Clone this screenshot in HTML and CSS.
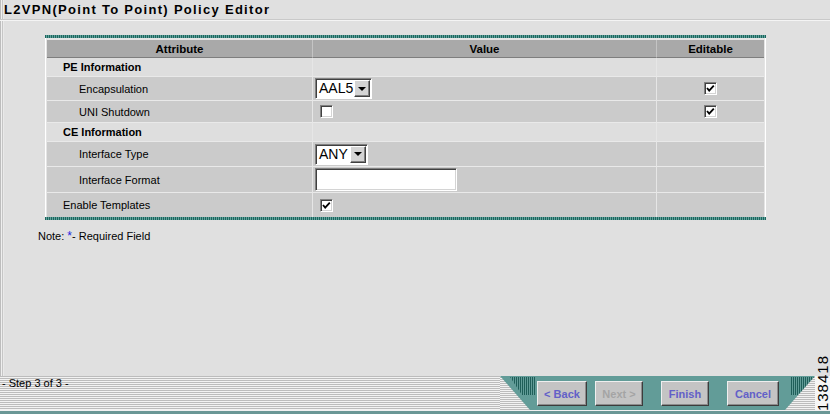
FILE: index.html
```html
<!DOCTYPE html>
<html lang="en">
<head>
  <meta charset="UTF-8" />
  <title>L2VPN(Point To Point) Policy Editor</title>
  <link rel="stylesheet" href="styles.css">
</head>
<body>
  <div class="page">
    <h1 class="title">L2VPN(Point To Point) Policy Editor</h1>

    <div class="content">
      <div class="policy-box">
        <div class="rule"></div>
        <div class="frame">
          <table class="policy">
            <tr class="head">
              <th class="col-attr">Attribute</th>
              <th class="col-val">Value</th>
              <th class="col-edit">Editable</th>
            </tr>
            <tr class="section r-pe">
              <td class="label">PE Information</td><td></td><td></td>
            </tr>
            <tr class="r-encap">
              <td class="sub">Encapsulation</td>
              <td class="val">
                <span class="select sel-aal"><span class="sel-text">AAL5</span><span class="sel-btn"><i class="tri"></i></span></span>
              </td>
              <td class="edit"><span class="cb"><svg width="11" height="11" viewBox="0 0 11 11"><polyline points="2,5 4.2,7.6 8.8,2.6" fill="none" stroke="#000" stroke-width="1.8"/></svg></span></td>
            </tr>
            <tr class="r-uni">
              <td class="sub">UNI Shutdown</td>
              <td class="val"><span class="cb cb-val"></span></td>
              <td class="edit"><span class="cb"><svg width="11" height="11" viewBox="0 0 11 11"><polyline points="2,5 4.2,7.6 8.8,2.6" fill="none" stroke="#000" stroke-width="1.8"/></svg></span></td>
            </tr>
            <tr class="section r-ce">
              <td class="label">CE Information</td><td></td><td></td>
            </tr>
            <tr class="r-type">
              <td class="sub">Interface Type</td>
              <td class="val">
                <span class="select sel-any"><span class="sel-text">ANY</span><span class="sel-btn"><i class="tri"></i></span></span>
              </td>
              <td class="edit"></td>
            </tr>
            <tr class="r-format">
              <td class="sub">Interface Format</td>
              <td class="val"><span class="field"></span></td>
              <td class="edit"></td>
            </tr>
            <tr class="r-tpl">
              <td class="top">Enable Templates</td>
              <td class="val"><span class="cb cb-val"><svg width="11" height="11" viewBox="0 0 11 11"><polyline points="2,5 4.2,7.6 8.8,2.6" fill="none" stroke="#000" stroke-width="1.8"/></svg></span></td>
              <td class="edit"></td>
            </tr>
          </table>
        </div>
        <div class="rule"></div>
      </div>

      <p class="note">Note: <span class="req">*</span>- Required Field</p>
    </div>

    <div class="footer">
      <div class="step">- Step 3 of 3 -</div>
      <div class="wizard">
        <svg class="corner" width="36" height="34" viewBox="0 0 36 34">
          <defs>
            <pattern id="hs" width="4" height="2" patternUnits="userSpaceOnUse">
              <rect width="4" height="1" fill="#f2f2f2"/>
              <rect y="1" width="4" height="1" fill="#bcbcbc"/>
            </pattern>
            <pattern id="vs" width="2" height="4" patternUnits="userSpaceOnUse">
              <rect width="1" height="4" fill="#1f5e59"/>
            </pattern>
          </defs>
          <polygon points="0,0 30,34 0,34" fill="url(#hs)"/>
          <polygon points="10,1 35,1 35,19 22,19" fill="url(#vs)"/>
        </svg>
        <button class="btn btn-back">&lt; Back</button>
        <button class="btn btn-next" disabled>Next &gt;</button>
        <button class="btn btn-finish">Finish</button>
        <button class="btn btn-cancel">Cancel</button>
        <svg class="corner" width="36" height="34" viewBox="0 0 36 34">
          <polygon points="36,0 36,34 6,34" fill="url(#hs)"/>
          <polygon points="11,1 35,1 19,19 11,19" fill="url(#vs)"/>
        </svg>
      </div>
      <div class="tail"></div>
    </div>
    <div class="strip"></div>

    <div class="figno">138418</div>
  </div>
</body>
</html>
```

FILE: styles.css
```css
body {
  margin: 0;
  width: 830px;
  height: 414px;
  overflow: hidden;
  background: #e0e0e0;
  font-family: "Liberation Sans", Arial, sans-serif;
  font-size: 11px;
  color: #000;
}
.page {
  position: relative;
  display: flex;
  flex-direction: column;
  height: 414px;
  background: linear-gradient(90deg, #bdbdbd 0 1px, #efefef 1px 2px, #c6c6c6 2px 3px, #e9e9e9 3px 4px, #e0e0e0 4px);
}
.title {
  margin: 0;
  height: 21px;
  box-sizing: border-box;
  padding: 2px 0 0 4px;
  font-size: 13px;
  line-height: 15px;
  font-weight: bold;
  letter-spacing: 1.3px;
  border-bottom: 1px solid #f4f4f4;
  box-shadow: inset 0 -1px #c9c9c9;
}
.content {
  flex: 1;
  padding: 14px 0 0 45px;
}

/* policy table */
.policy-box { width: 721px; }
.rule {
  height: 3px;
  background: repeating-linear-gradient(90deg, #1d655e 0 1px, #5fa29b 1px 2px);
}
.frame {
  border-left: 1px solid #fff;
  border-right: 1px solid #fff;
  padding: 2px 1px 0;
  background: #e4e4e4;
}
table.policy {
  width: 717px;
  border-collapse: separate;
  border-spacing: 0;
  table-layout: fixed;
}
.policy th, .policy td {
  padding: 0;
  box-sizing: border-box;
  vertical-align: middle;
  text-align: left;
  border-bottom: 1px solid #e9e9e9;
}
.policy th:not(:last-child), .policy td:not(:last-child) { border-right: 1px solid #e6e6e6; }
.policy .col-attr { width: 266px; }
.policy .col-val { width: 344px; }
.policy .col-edit { width: 107px; }
.policy tr.head th {
  height: 18px;
  background: #a9a9a9;
  text-align: center;
  font-size: 11.5px;
  font-weight: bold;
  border-bottom: 1px solid #7e7e7e;
}
.policy tr.head th:not(:last-child) { border-right-color: #c4c4c4; }
.policy td { background: #cbcbcb; }
.policy tr.section td { background: #dedede; }
.policy td.label { font-weight: bold; padding-left: 16px; }
.policy td.sub { padding-left: 32px; }
.policy td.top { padding-left: 16px; }
.policy td.val { padding-left: 2px; }
.policy td.edit { text-align: center; padding-right: 1px; }
.policy tr.r-tpl td { border-bottom: 0; }

tr.r-pe { height: 19px; }
tr.r-encap { height: 24px; }
tr.r-uni { height: 22px; }
tr.r-ce { height: 19px; }
tr.r-type { height: 25px; }
tr.r-format { height: 26px; }
tr.r-tpl { height: 24px; }

/* form controls */
.cb {
  display: inline-block;
  width: 13px;
  height: 13px;
  box-sizing: border-box;
  background: #fff;
  border: 1px solid;
  border-color: #808080 #fff #fff #808080;
  box-shadow: inset 1px 1px #404040, inset -1px -1px #d4d4d4;
  vertical-align: middle;
  line-height: 0;
}
.cb svg { display: block; }
.cb-val { margin-left: 5px; }
.select {
  display: inline-flex;
  height: 21px;
  box-sizing: border-box;
  border: 1px solid;
  border-color: #808080 #fff #fff #808080;
  box-shadow: inset 1px 1px #404040;
  background: #fff;
  vertical-align: middle;
}
.sel-aal { width: 57px; }
.sel-any { width: 53px; }
.sel-text {
  flex: 1;
  padding: 1px 0 0 3px;
  font-size: 14px;
  line-height: 17px;
}
.sel-btn {
  width: 16px;
  margin: 1px 1px 1px 0;
  box-sizing: border-box;
  background: #d4d4d4;
  border: 1px solid;
  border-color: #fff #404040 #404040 #fff;
  box-shadow: inset -1px -1px #808080;
  display: flex;
  align-items: center;
  justify-content: center;
}
.tri {
  width: 0;
  height: 0;
  border-left: 4px solid transparent;
  border-right: 4px solid transparent;
  border-top: 4px solid #000;
}
.field {
  display: inline-block;
  width: 142px;
  height: 23px;
  box-sizing: border-box;
  border: 1px solid;
  border-color: #808080 #fff #fff #808080;
  box-shadow: inset 1px 1px #404040, inset -1px -1px #d4d4d4;
  background: #fff;
  vertical-align: middle;
}

.note { margin: 10px 0 0 -7px; line-height: 13px; }
.req { color: #2424e0; font-size: 12px; }

/* wizard footer */
.footer {
  display: flex;
  height: 34px;
}
.step {
  flex: 1;
  padding: 1px 0 0 2px;
  line-height: 13px;
  background: repeating-linear-gradient(180deg, #bcbcbc 0 1px, #f2f2f2 1px 2px);
}
.wizard {
  width: 315px;
  display: flex;
  align-items: center;
  background: #629c98;
}
.corner { flex: none; display: block; }
.btn {
  height: 25px;
  box-sizing: border-box;
  padding: 0;
  background: #c4c4c4;
  border: 1px solid;
  border-color: #efefef #3c3c3c #3c3c3c #efefef;
  box-shadow: inset -1px -1px #8c8c8c;
  font-family: "Liberation Sans", Arial, sans-serif;
  font-size: 11px;
  font-weight: bold;
  color: #6260c8;
  margin-top: 1px;
}
.btn-back { width: 50px; margin-left: 1px; }
.btn-next { width: 48px; margin-left: 8px; color: #a4a4a4; }
.btn-finish { width: 48px; margin-left: 18px; }
.btn-cancel { width: 52px; margin-left: 18px; }
.tail { width: 15px; background: #f6f6f6; }
.strip {
  height: 4px;
  box-sizing: border-box;
  border-top: 1px solid #f0f0f0;
  background: #6a9795;
}
.figno {
  position: absolute;
  right: 1px;
  bottom: 3px;
  writing-mode: vertical-rl;
  transform: rotate(180deg);
  font-size: 15px;
  line-height: 13px;
  letter-spacing: 1px;
}
```
